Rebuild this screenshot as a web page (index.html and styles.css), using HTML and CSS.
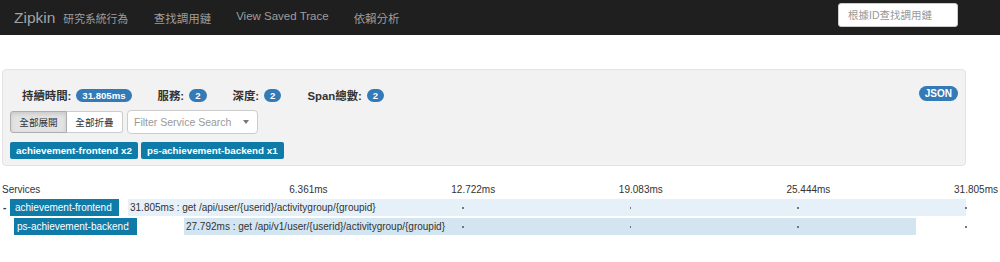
FILE: index.html
```html
<!DOCTYPE html>
<html lang="zh-Hant">
<head>
<meta charset="utf-8">
<title>Zipkin</title>
<link rel="stylesheet" href="styles.css">
</head>
<body>
<nav class="navbar">
  <a class="brand">Zipkin</a>
  <span class="subtitle">研究系統行為</span>
  <ul class="nav">
    <li><a>查找調用鏈</a></li>
    <li><a>View Saved Trace</a></li>
    <li><a>依賴分析</a></li>
  </ul>
  <div class="search"><input type="text" placeholder="根據ID查找調用鏈"></div>
</nav>

<section class="panel">
  <div class="summary">
    <div class="stat"><strong>持續時間:</strong><span class="badge">31.805ms</span></div>
    <div class="stat"><strong>服務:</strong><span class="badge">2</span></div>
    <div class="stat"><strong>深度:</strong><span class="badge">2</span></div>
    <div class="stat"><strong>Span總數:</strong><span class="badge">2</span></div>
    <span class="badge json">JSON</span>
  </div>
  <div class="controls">
    <div class="btn-group">
      <button class="btn active">全部展開</button>
      <button class="btn">全部折疊</button>
    </div>
    <div class="select"><span>Filter Service Search</span><span class="caret"></span></div>
  </div>
  <div class="services">
    <span class="svc">achievement-frontend x2</span>
    <span class="svc">ps-achievement-backend x1</span>
  </div>
</section>

<section class="trace">
  <div class="trace-head">
    <div class="head-name">Services</div>
    <div class="head-tick">6.361ms</div>
    <div class="head-tick">12.722ms</div>
    <div class="head-tick">19.083ms</div>
    <div class="head-tick">25.444ms</div>
    <div class="head-tick">31.805ms</div>
  </div>
  <div class="span-row">
    <div class="name-cell"><span class="toggle">-</span><span class="svc-label">achievement-frontend</span></div>
    <div class="bar-area">
      <div class="bar level0" style="margin-left:0%;width:100%">31.805ms : get /api/user/{userid}/activitygroup/{groupid}</div>
      <i class="dot" style="left:40%"></i><i class="dot" style="left:60%"></i><i class="dot" style="left:80%"></i><i class="dot" style="left:100%"></i>
    </div>
  </div>
  <div class="span-row">
    <div class="name-cell depth1"><span class="svc-label">ps-achievement-backend</span></div>
    <div class="bar-area">
      <div class="bar level1" style="margin-left:6.68%;width:87.38%">27.792ms : get /api/v1/user/{userid}/activitygroup/{groupid}</div>
      <i class="dot" style="left:0%"></i><i class="dot" style="left:40%"></i><i class="dot" style="left:60%"></i><i class="dot" style="left:80%"></i><i class="dot" style="left:100%"></i>
    </div>
  </div>
</section>
</body>
</html>
```

FILE: styles.css
```css
* { box-sizing: border-box; }
body {
  margin: 0;
  font-family: "Liberation Sans", "Noto Sans CJK TC", sans-serif;
  color: #333;
  background: #fff;
  width: 1000px;
}
.navbar {
  height: 35px;
  background: #1f1f1f;
  display: flex;
  align-items: center;
  padding-left: 14px;
  color: #9d9d9d;
}
.brand { font-size: 15.5px; color: #a3a3a3; }
.subtitle { font-size: 10.8px; margin-left: 8px; margin-top: 1px; }
.nav {
  list-style: none;
  display: flex;
  margin: 0 0 0 13px;
  padding: 0;
}
.nav a {
  display: block;
  padding: 0 12.5px;
  font-size: 11.5px;
  color: #9d9d9d;
}
.search { margin-left: auto; margin-right: 42px; margin-top: -5px; }
.search input {
  width: 120px;
  height: 24px;
  border: 1px solid #ccc;
  border-radius: 3px;
  padding: 0 0 0 9px;
  font-family: inherit;
  font-size: 10.5px;
  background: #fff;
}
.search input::placeholder { color: #999; }

.panel {
  margin: 34px 0 0 2px;
  width: 964px;
  background: #f2f2f2;
  border: 1px solid #e3e3e3;
  border-radius: 4px;
  padding: 17px 7px 6px 7px;
}
.summary {
  display: flex;
  align-items: center;
  height: 16px;
  padding-left: 12px;
  gap: 26px;
}
.stat { display: flex; align-items: center; gap: 5px; }
.stat strong { font-size: 11.4px; color: #333; }
.badge {
  display: inline-block;
  background: #337ab7;
  color: #fff;
  font-weight: bold;
  font-size: 9.6px;
  line-height: 13px;
  height: 13px;
  padding: 0 6px;
  border-radius: 7px;
}
.badge.json {
  margin-left: auto;
  height: 15px;
  line-height: 15px;
  padding: 0 6px;
  font-size: 10px;
  border-radius: 8px;
  align-self: flex-start;
  margin-top: -1px;
}
.controls {
  display: flex;
  align-items: center;
  margin-top: 7px;
  height: 24px;
  gap: 4px;
}
.btn-group { display: flex; }
.btn {
  height: 22px;
  font-family: inherit;
  font-size: 9.6px;
  color: #333;
  background: #fff;
  border: 1px solid #ccc;
  padding: 0 8px;
  margin: 0;
}
.btn:first-child { border-radius: 3px 0 0 3px; width: 57px; }
.btn:last-child { border-radius: 0 3px 3px 0; border-left: none; width: 56px; }
.btn.active {
  background: #e3e3e3;
  border-color: #adadad;
  box-shadow: inset 0 2px 4px rgba(0,0,0,0.12);
}
.select {
  width: 131px;
  height: 24px;
  background: #fff;
  border: 1px solid #ccc;
  border-radius: 4px;
  display: flex;
  align-items: center;
  padding-left: 6px;
  font-size: 10.5px;
  color: #999;
}
.caret {
  margin-left: auto;
  margin-right: 8px;
  width: 0;
  height: 0;
  border-left: 3px solid transparent;
  border-right: 3px solid transparent;
  border-top: 4px solid #777;
}
.services {
  display: flex;
  gap: 3px;
  margin-top: 8px;
}
.svc {
  display: inline-block;
  background: #0f7ba9;
  color: #fff;
  font-weight: bold;
  font-size: 9.8px;
  height: 17px;
  line-height: 17px;
  padding: 0 6px;
  border-radius: 2px;
}

.trace { margin-top: 17px; font-size: 10px; color: #333; }
.trace-head {
  display: flex;
  width: 1000px;
  padding: 0 2px;
  height: 13px;
  line-height: 13px;
}
.head-name { width: 158px; }
.head-tick { flex: 1; text-align: right; }
.span-row {
  display: flex;
  height: 17px;
  margin-top: 2px;
}
.trace-head + .span-row { margin-top: 3px; }
.name-cell {
  width: 128px;
  flex-shrink: 0;
  display: flex;
  align-items: stretch;
  padding-left: 3px;
  white-space: nowrap;
}
.name-cell.depth1 { padding-left: 14px; }
.toggle { width: 7px; flex-shrink: 0; font-weight: bold; line-height: 17px; }
.svc-label {
  flex-shrink: 0;
  background: #0f7ba9;
  color: #fff;
  line-height: 17px;
  padding: 0 7px 0 5px;
  font-size: 10px;
  white-space: nowrap;
}
.depth1 .svc-label { padding: 0 8px 0 3px; }
.bar-area {
  position: relative;
  width: 838px;
  flex-shrink: 0;
  height: 17px;
}
.bar {
  height: 17px;
  line-height: 17px;
  padding-left: 2px;
  white-space: nowrap;
}
.bar.level0 { background: #e6f0f8; }
.bar.level1 { background: #d4e5f2; }
.dot {
  position: absolute;
  top: 8px;
  width: 1.5px;
  height: 1.5px;
  margin-left: -1px;
  background: #777;
}
```
